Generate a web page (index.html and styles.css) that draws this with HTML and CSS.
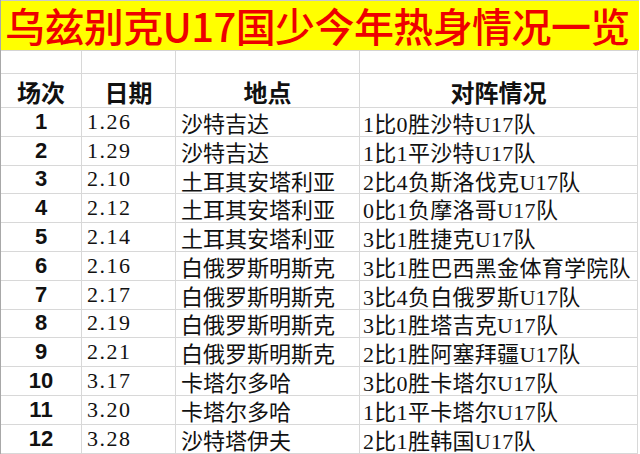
FILE: index.html
```html
<!DOCTYPE html>
<html lang="zh">
<head>
<meta charset="utf-8">
<link rel="stylesheet" href="styles.css">
</head>
<body>
<div class="sheet">
  <div class="title">乌兹别克U17国少今年热身情况一览</div>
  <div class="grid">
    <div class="c blank"></div><div class="c blank"></div><div class="c blank"></div><div class="c blank"></div>
    <div class="c hd">场次</div><div class="c hd">日期</div><div class="c hd">地点</div><div class="c hd">对阵情况</div>

    <div class="c no">1</div><div class="c dt">1.26</div><div class="c tx">沙特吉达</div><div class="c tx">1比0胜沙特U17队</div>
    <div class="c no">2</div><div class="c dt">1.29</div><div class="c tx">沙特吉达</div><div class="c tx">1比1平沙特U17队</div>
    <div class="c no">3</div><div class="c dt">2.10</div><div class="c tx">土耳其安塔利亚</div><div class="c tx">2比4负斯洛伐克U17队</div>
    <div class="c no">4</div><div class="c dt">2.12</div><div class="c tx">土耳其安塔利亚</div><div class="c tx">0比1负摩洛哥U17队</div>
    <div class="c no">5</div><div class="c dt">2.14</div><div class="c tx">土耳其安塔利亚</div><div class="c tx">3比1胜捷克U17队</div>
    <div class="c no">6</div><div class="c dt">2.16</div><div class="c tx">白俄罗斯明斯克</div><div class="c tx">3比1胜巴西黑金体育学院队</div>
    <div class="c no">7</div><div class="c dt">2.17</div><div class="c tx">白俄罗斯明斯克</div><div class="c tx">3比4负白俄罗斯U17队</div>
    <div class="c no">8</div><div class="c dt">2.19</div><div class="c tx">白俄罗斯明斯克</div><div class="c tx">3比1胜塔吉克U17队</div>
    <div class="c no">9</div><div class="c dt">2.21</div><div class="c tx">白俄罗斯明斯克</div><div class="c tx">2比1胜阿塞拜疆U17队</div>
    <div class="c no">10</div><div class="c dt">3.17</div><div class="c tx">卡塔尔多哈</div><div class="c tx">3比0胜卡塔尔U17队</div>
    <div class="c no">11</div><div class="c dt">3.20</div><div class="c tx">卡塔尔多哈</div><div class="c tx">1比1平卡塔尔U17队</div>
    <div class="c no">12</div><div class="c dt">3.28</div><div class="c tx">沙特塔伊夫</div><div class="c tx">2比1胜韩国U17队</div>
  </div>
</div>
</body>
</html>
```

FILE: styles.css
```css
html, body {
  margin: 0;
  padding: 0;
  background: #ffffff;
}

.sheet {
  width: 640px;
  height: 454px;
  overflow: hidden;
  border-left: 1px solid #a8a8a8;
  box-sizing: border-box;
}

.title {
  height: 51px;
  width: 638px;
  box-sizing: border-box;
  background: #ffff00;
  border-top: 1px solid #c8c8c8;
  border-bottom: 1px solid #d4d4d4;
  color: #ee0000;
  font-family: "Noto Sans CJK SC", sans-serif;
  font-weight: 500;
  font-size: 40px;
  line-height: 48px;
  letter-spacing: -0.6px;
  white-space: nowrap;
  padding-left: 4px;
}

.grid {
  display: grid;
  grid-template-columns: 81px 94px 184px 278px;
  grid-template-rows: 23px 34px repeat(12, 28.8px);
}

.c {
  box-sizing: border-box;
  border-right: 1px solid #d8d8d8;
  border-bottom: 1px solid #d8d8d8;
  white-space: nowrap;
  display: flex;
  align-items: center;
  color: #111111;
  min-width: 0;
}

.hd {
  justify-content: center;
  font-family: "Noto Sans CJK SC", sans-serif;
  font-weight: 700;
  font-size: 24px;
  padding-top: 2px;
}

.no {
  justify-content: center;
  font-family: "Liberation Sans", Arial, sans-serif;
  font-weight: 700;
  font-size: 22px;
}

.dt {
  padding-left: 5px;
  font-family: "Liberation Serif", "Noto Sans CJK SC", serif;
  font-size: 22px;
  letter-spacing: 1.5px;
}

.tx {
  padding-left: 5px;
  font-family: "Liberation Serif", "Noto Sans CJK SC", serif;
  font-size: 22px;
  overflow: visible;
}

.grid .tx:nth-child(4n) {
  padding-left: 3px;
  letter-spacing: 0.3px;
}
```
